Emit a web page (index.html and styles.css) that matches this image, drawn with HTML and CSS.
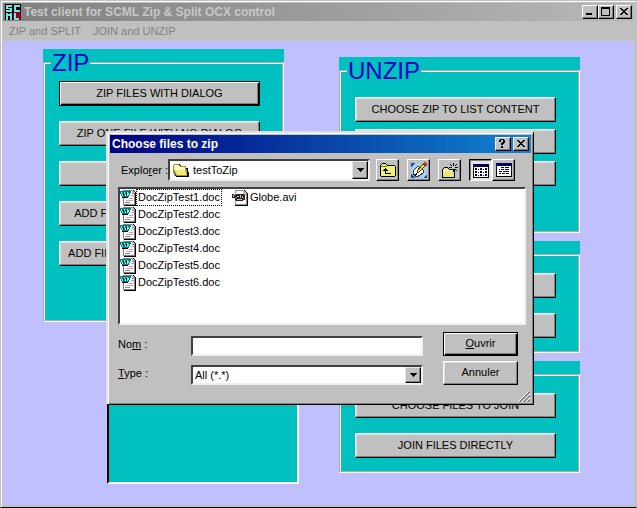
FILE: index.html
```html
<!DOCTYPE html>
<html lang="fr">

<head>
    <meta charset="UTF-8">
    <meta name="viewport" content="width=device-width, initial-scale=1.0">
    <title>Test client for SCML Zip &amp; Split OCX control</title>
    <link rel="stylesheet" href="styles.css">
</head>

<body>
    <!-- shared icons -->
    <svg class="sprite" aria-hidden="true">
        <symbol id="arrow" viewBox="0 0 7 4">
            <path d="M0 0h7v1H6v1H5v1H4v1H3V3H2V2H1V1H0z" fill="#000" />
        </symbol>
        <symbol id="cross" viewBox="0 0 8 7">
            <path d="M0 0h2v1h1v1h2V1h1V0h2v1H7v1H6v1H5v1h1v1h1v1h1v1H6V6H5V5H3v1H2v1H0V6h1V5h1V4h1V3H2V2H1V1H0z" fill="#000" />
        </symbol>
        <symbol id="doc" viewBox="0 0 16 16">
            <path d="M4 0h9l3 3v13H4z" fill="#000" />
            <path d="M3 0h9v3h3v12H3z" fill="#808080" />
            <path d="M4 1h8v3h2v10H4z" fill="#fff" />
            <path d="M12 0h1v1h1v1h1v1h-3z" fill="#c0c0c0" />
            <path d="M11 5h3v1h-3zM6 10h7v1H6zM9 8h4v1H9z" fill="#d898a8" />
            <path d="M5 12h5v1H5z" fill="#8080c0" />
            <path d="M0 1h11v2h-1v2H9v2H8v1H2V6H1V4H0z" fill="#008080" />
            <path d="M1 2h1v2h1v2H2V4H1zM4 2h1v2h1v2H5V4H4zM7 2h1v1h1v2H8v1H7z" fill="#70f0f0" />
            <path d="M2 7h6v1H2zM3 3h1v2H3zM6 3h1v2H6z" fill="#000" />
        </symbol>
    </svg>

    <div class="window">
        <header class="title-bar inactive">
            <svg class="app-icon" viewBox="0 0 16 16" aria-hidden="true">
                <path d="M0 0h16v16H0z" fill="#000" />
                <path d="M1 1h6v2H3v1h4v4H1V6h4V5H1zM9 1h6v2h-4v3h4v2H9z" fill="#70e8e8" />
                <path d="M8 8h8v8H8z" fill="#900010" />
                <path d="M1 9h2v1h2V9h2v7H5v-4H3v4H1zM9 9h2v5h3v2H9z" fill="#70e8e8" />
            </svg>
            <h1 class="title-text">Test client for SCML Zip &amp; Split OCX control</h1>
            <div class="title-buttons">
                <button type="button" class="title-btn" aria-label="Minimize">
                    <svg width="8" height="7" viewBox="0 0 8 7"><path d="M0 5h6v2H0z" /></svg>
                </button>
                <button type="button" class="title-btn" aria-label="Maximize">
                    <svg width="9" height="9" viewBox="0 0 9 9"><path d="M0 0h9v9H0zM1 2v6h7V2z" fill-rule="evenodd" /></svg>
                </button>
                <button type="button" class="title-btn close" aria-label="Close">
                    <svg width="8" height="7"><use href="#cross" /></svg>
                </button>
            </div>
        </header>

        <nav class="menu-bar">
            <button type="button" class="menu-item">ZIP and SPLIT</button>
            <button type="button" class="menu-item">JOIN and UNZIP</button>
        </nav>

        <main class="client">
            <div class="column">
                <div class="panel">
                    <fieldset class="group zip">
                        <legend>ZIP</legend>
                        <button type="button" class="btn default">ZIP FILES WITH DIALOG</button>
                        <button type="button" class="btn">ZIP ONE FILE WITH NO DIALOG</button>
                        <button type="button" class="btn">ZIP FOLDER</button>
                        <button type="button" class="btn">ADD FILES TO ZIP WITH DIALOG</button>
                        <button type="button" class="btn">ADD FILE TO ZIP WITH NO DIALOG</button>
                    </fieldset>
                </div>
                <div class="result-list"></div>
            </div>

            <div class="column right">
                <div class="panel">
                    <fieldset class="group unzip">
                        <legend>UNZIP</legend>
                        <button type="button" class="btn">CHOOSE ZIP TO LIST CONTENT</button>
                        <button type="button" class="btn">UNZIP FILES</button>
                        <button type="button" class="btn">UNZIP ONE FILE</button>
                    </fieldset>
                </div>
                <div class="panel">
                    <fieldset class="group">
                        <legend>SPLIT</legend>
                        <button type="button" class="btn">CHOOSE FILE TO SPLIT</button>
                        <button type="button" class="btn">SPLIT DIRECTLY</button>
                    </fieldset>
                </div>
                <div class="panel">
                    <fieldset class="group">
                        <legend>JOIN</legend>
                        <button type="button" class="btn">CHOOSE FILES TO JOIN</button>
                        <button type="button" class="btn">JOIN FILES DIRECTLY</button>
                    </fieldset>
                </div>
            </div>
        </main>
    </div>

    <!-- file picker -->
    <div class="dialog" role="dialog" aria-labelledby="dialogTitle">
        <header class="title-bar">
            <h2 class="title-text" id="dialogTitle">Choose files to zip</h2>
            <div class="title-buttons">
                <button type="button" class="title-btn" aria-label="Help">
                    <svg width="7" height="9" viewBox="0 0 7 9"><path d="M1 0h4v1h1v3H5v1H4v1H2V4h1V3h1V1H2v2H0V1h1zM2 7h2v2H2z" /></svg>
                </button>
                <button type="button" class="title-btn close" aria-label="Close">
                    <svg width="8" height="7"><use href="#cross" /></svg>
                </button>
            </div>
        </header>

        <div class="toolbar">
            <label for="folder">Explo<u>r</u>er :</label>
            <div class="combo folder-combo">
                <svg class="folder-icon" width="16" height="16" viewBox="0 0 16 16" aria-hidden="true">
                    <path d="M1 3l1-1h4l2 2h5v2h2l1 8v1H3L1 12z" fill="#000" />
                    <path d="M0 3l1-1h4l2 2h6v3h1v7H3L0 11z" fill="#a09020" />
                    <path d="M1 3h4l2 2h5v2H4l-1 3-2-3z" fill="#ffffc0" />
                    <path d="M1 7h11l2 6H4z" fill="#f0e878" />
                    <path d="M1 7h11v1H2z" fill="#fffff0" />
                </svg>
                <select id="folder">
                    <option>testToZip</option>
                </select>
                <span class="drop"><svg width="7" height="4"><use href="#arrow" /></svg></span>
            </div>
            <button type="button" class="tool-btn" aria-label="Up one level">
                <svg width="16" height="14" viewBox="0 0 16 14">
                    <path d="M2 0h4v1h1v1h8v1h1v10h-1v1H1v-1H0V2h1V1h1z" fill="#000" />
                    <path d="M2 1h4v1h1v1h8v10H1V2h1z" fill="#f0f080" />
                    <path d="M1 3h6v1H1z" fill="#808000" />
                    <path d="M5 5h1v1h1v1h1v1H6v2h5v1H5V8H3V7h1V6h1z" fill="#000" />
                </svg>
            </button>
            <button type="button" class="tool-btn" aria-label="Desktop">
                <svg width="16" height="16" viewBox="0 0 16 16">
                    <path d="M0 1h16v15H0z" fill="#1848a0" />
                    <path d="M4 1h8l4 4v7l-4 4H4l-4-4V5z" fill="#a8d0f0" />
                    <path d="M2 9l5-5 5 4v3l-6 4-4-3z" fill="#fff" stroke="#303040" />
                    <path d="M6 9l1 2 7-7-2-2z" fill="#f8d840" stroke="#504000" />
                    <path d="M12 1l2-1 2 2-2 2z" fill="#d03030" />
                    <path d="M5 11l2 1-3 2z" fill="#000" />
                </svg>
            </button>
            <button type="button" class="tool-btn new-folder" aria-label="New folder">
                <svg width="16" height="15" viewBox="0 0 16 15">
                    <path d="M1 5h1V4h4v1h1v1h6v9H0V6h1z" fill="#000" />
                    <path d="M2 5h4v1h1v1h5v7H1V6h1z" fill="#e8e878" />
                    <path d="M1 7h6v1H1z" fill="#fffff0" />
                    <path d="M11 0h1v3h-1zM11 6h1v3h-1zM7 4h3v1H7zM13 4h3v1h-3zM8 1h1v1H8zM9 2h1v1H9zM14 1h1v1h-1zM13 2h1v1h-1zM9 6h1v1H9zM13 6h1v1h-1zM14 7h1v1h-1z" fill="#000" />
                </svg>
            </button>
            <div class="view-group">
                <button type="button" class="tool-btn pressed" aria-label="List">
                    <svg width="16" height="14" viewBox="0 0 16 14">
                        <path d="M0 0h16v14H0z" fill="#000" />
                        <path d="M0 0h16v3H0z" fill="#000060" />
                        <path d="M1 3h14v10H1z" fill="#fff" />
                        <path d="M2 4h2v2H2zM5 5h1v1H5zM7 4h2v2H7zM10 5h1v1h-1zM12 4h2v2h-2zM2 7h2v2H2zM5 8h1v1H5zM7 7h2v2H7zM10 8h1v1h-1zM12 7h2v2h-2zM2 10h2v2H2zM5 11h1v1H5zM7 10h2v2H7zM10 11h1v1h-1zM12 10h2v2h-2z" fill="#000040" />
                    </svg>
                </button>
                <button type="button" class="tool-btn" aria-label="Details">
                    <svg width="16" height="14" viewBox="0 0 16 14">
                        <path d="M0 0h16v14H0z" fill="#000" />
                        <path d="M0 0h16v3H0z" fill="#000060" />
                        <path d="M1 3h14v10H1z" fill="#fff" />
                        <path d="M5 4h3v1H5zM9 4h4v1H9zM3 6h1v1H3zM5 6h3v1H5zM9 6h4v1H9zM3 8h3v1H3zM7 8h6v1H7zM3 10h2v1H3zM6 10h3v1H6zM10 10h3v1h-3z" fill="#000040" />
                    </svg>
                </button>
            </div>
        </div>

        <ul class="file-list" aria-label="Files">
            <li><svg class="file-icon"><use href="#doc" /></svg><span class="file-name focused">DocZipTest1.doc</span></li>
            <li><svg class="file-icon"><use href="#doc" /></svg><span class="file-name">DocZipTest2.doc</span></li>
            <li><svg class="file-icon"><use href="#doc" /></svg><span class="file-name">DocZipTest3.doc</span></li>
            <li><svg class="file-icon"><use href="#doc" /></svg><span class="file-name">DocZipTest4.doc</span></li>
            <li><svg class="file-icon"><use href="#doc" /></svg><span class="file-name">DocZipTest5.doc</span></li>
            <li><svg class="file-icon"><use href="#doc" /></svg><span class="file-name">DocZipTest6.doc</span></li>
            <li>
                <svg class="file-icon" viewBox="0 0 16 16">
                    <path d="M3 0h9l4 4v12H3z" fill="#000" />
                    <path d="M3 0h9v4h3v11H3z" fill="#909090" />
                    <path d="M4 1h7v4h3v9H4z" fill="#fff" />
                    <path d="M11 0h1v1h1v1h1v1h1v1h-4z" fill="#c0c0c0" />
                    <path d="M0 4h2v1h2V4h8v1h1v5h-2v1H4v-1H3V8H0z" fill="#282020" />
                    <path d="M1 5h1v2H1zM5 6h2v1H5zM8 5h1v3H8zM10 6h1v2h-1zM5 9h5v1H5z" fill="#c8c0c0" />
                    <path d="M3 7h2v1H3zM11 8h1v1h-1z" fill="#a05058" />
                </svg><span class="file-name">Globe.avi</span>
            </li>
        </ul>

        <form class="file-form">
            <label for="fileName">No<u>m</u> :</label>
            <input type="text" id="fileName" class="text-box">
            <button type="button" class="btn default"><u>O</u>uvrir</button>
            <label for="fileType"><u>T</u>ype :</label>
            <div class="combo">
                <select id="fileType">
                    <option>All (*.*)</option>
                </select>
                <span class="drop"><svg width="7" height="4"><use href="#arrow" /></svg></span>
            </div>
            <button type="button" class="btn">Annuler</button>
        </form>

        <svg class="grip" width="12" height="12" viewBox="0 0 12 12" aria-hidden="true">
            <path d="M0 12L12 0M4 12l8-8M8 12l4-4" stroke="#fff" />
            <path d="M1 12L12 1M2 12L12 2M5 12l7-7M6 12l6-6M9 12l3-3M10 12l2-2" stroke="#808080" />
        </svg>
    </div>
</body>

</html>
```
FILE: styles.css
```css
* {
    box-sizing: border-box;
}

body {
    margin: 0;
    background: #c0c0c0;
    font-family: "Liberation Sans", Arial, sans-serif;
    font-size: 11px;
    color: #000;
}

button,
input,
select {
    font: inherit;
    color: inherit;
    border-radius: 0;
}

svg {
    display: block;
    flex: none;
    shape-rendering: crispEdges;
}

.sprite {
    position: absolute;
    width: 0;
    height: 0;
}

/* main window */
.window {
    display: flex;
    flex-direction: column;
    min-height: 100vh;
    padding: 1px 2px 2px;
    background: #c0c0c0;
    border: 1px solid #c0c0c0;
    border-bottom-color: #000;
    box-shadow: inset 1px 1px #fff;
}

.title-bar {
    display: flex;
    align-items: center;
    height: 18px;
    padding: 0 2px;
    color: #fff;
    background: linear-gradient(to right, #000080, #1084d0);
}

.title-bar.inactive {
    margin-top: 1px;
    color: #c8c8c8;
    background: linear-gradient(to right, #808080, #b8b8b8);
}

.app-icon {
    width: 16px;
    height: 16px;
    margin-right: 3px;
}

.title-text {
    flex: 1;
    margin: 0;
    font-size: 12px;
    line-height: 18px;
    white-space: nowrap;
}

.title-buttons {
    display: flex;
}

.title-btn {
    display: flex;
    align-items: center;
    justify-content: center;
    width: 16px;
    height: 14px;
    padding: 0 1px 1px 0;
    background: #c0c0c0;
    border: 1px solid;
    border-color: #fff #000 #000 #fff;
    box-shadow: inset -1px -1px #808080;
}

.title-btn.close {
    margin-left: 2px;
}

.menu-bar {
    display: flex;
    gap: 12px;
    height: 20px;
    padding: 0 6px;
}

.menu-item {
    padding: 0;
    border: none;
    background: none;
    color: #808080;
}

.client {
    flex: 1;
    display: grid;
    grid-template-columns: minmax(0, 1fr) minmax(0, 1fr);
    gap: 55px;
    padding: 8px 54px 20px 40px;
    background: #c0c0ff;
}

.column {
    display: flex;
    flex-direction: column;
    gap: 8px;
}

.column.right {
    padding-top: 8px;
}

.panel {
    background: #00c0c0;
}

.group {
    display: flex;
    flex-direction: column;
    gap: 15px;
    min-width: 0;
    margin: 0;
    padding: 4px 22px 13px 14px;
    border: 2px groove #fff;
}

.group.zip {
    padding-bottom: 54px;
}

.group.unzip {
    gap: 7px;
    padding-top: 12px;
    padding-bottom: 45px;
}

.group legend {
    margin-left: -8px;
    padding: 0 1px;
    font-size: 24px;
    line-height: 28px;
    color: #0000c0;
}

.btn {
    width: 100%;
    height: 25px;
    padding: 0 0 2px;
    background: #c0c0c0;
    border: 1px solid;
    border-color: #fff #000 #000 #fff;
    box-shadow: inset -1px -1px #808080, inset 1px 1px #e0e0e0;
    white-space: nowrap;
}

.btn.default {
    border-color: #000;
    box-shadow: inset 1px 1px #fff, inset -1px -1px #000, inset -2px -2px #808080;
}

.result-list {
    height: 154px;
    margin: 0 -15px 0 64px;
    background: #00c0c0;
    border: 2px solid;
    border-color: #808080 #fff #fff #000;
}

/* dialog */
.dialog {
    position: absolute;
    top: 131px;
    left: 106px;
    right: 103px;
    padding: 2px;
    background: #c0c0c0;
    border: 1px solid;
    border-color: #e0e0e0 #000 #000 #e0e0e0;
    box-shadow: inset 1px 1px #fff, inset -1px -1px #808080;
    border-width: 2px 1px 1px 2px;
}

.toolbar {
    display: flex;
    align-items: center;
    gap: 8px;
    padding: 6px 16px 6px 11px;
}

.toolbar label {
    width: 47px;
    margin-right: -8px;
    white-space: nowrap;
}

.combo,
.text-box {
    display: flex;
    align-items: center;
    width: 100%;
    height: 20px;
    background: #fff;
    border: 2px solid;
    border-color: #404040 #f0f0f0 #f0f0f0 #404040;
}

.folder-combo {
    flex: 1;
    width: auto;
    height: 22px;
    margin-right: -2px;
    padding-left: 3px;
}

.combo select {
    flex: 1;
    min-width: 0;
    height: 100%;
    padding: 0 2px;
    border: none;
    outline: none;
    background: none;
    appearance: none;
}

.folder-combo select {
    padding-left: 4px;
}

.drop {
    display: flex;
    align-items: center;
    justify-content: center;
    width: 16px;
    height: 100%;
    background: #c0c0c0;
    border: 1px solid;
    border-color: #e8e8e8 #000 #000 #e8e8e8;
    box-shadow: inset -1px -1px #808080;
    pointer-events: none;
}

.tool-btn {
    display: flex;
    align-items: center;
    justify-content: center;
    width: 23px;
    height: 22px;
    padding: 0;
    background: #c0c0c0;
    border: 1px solid;
    border-color: #fff #000 #000 #fff;
    box-shadow: inset -1px -1px #808080;
}

.tool-btn.pressed {
    padding: 2px 0 0 1px;
    background: repeating-conic-gradient(#fff 0 25%, #d0d0d0 0 50%) 0 0 / 2px 2px;
    border-color: #000 #fff #fff #000;
    box-shadow: inset 1px 1px #808080;
}

.view-group {
    display: flex;
}

.file-list {
    display: grid;
    grid-template-rows: repeat(6, 17px);
    grid-auto-flow: column;
    grid-auto-columns: 112px;
    height: 138px;
    margin: 0 5px 0 8px;
    padding: 0;
    background: #fff;
    border: 2px solid;
    border-color: #404040 #f0f0f0 #f0f0f0 #404040;
    list-style: none;
}

.file-list li {
    display: flex;
    align-items: center;
}

.file-icon {
    width: 16px;
    height: 16px;
}

.file-name {
    padding: 0 1px;
    line-height: 15px;
    border: 1px solid transparent;
}

.file-name.focused {
    border: 1px dotted #000;
}

.file-form {
    display: grid;
    grid-template-columns: 53px minmax(0, 1fr) 75px;
    column-gap: 20px;
    row-gap: 5px;
    align-items: end;
    padding: 7px 13px 17px 8px;
}

.file-form label {
    line-height: 24px;
}

.file-form .btn {
    height: 24px;
}

.text-box {
    padding: 0 2px;
    outline: none;
}

.grip {
    position: absolute;
    right: 3px;
    bottom: 2px;
}
```
